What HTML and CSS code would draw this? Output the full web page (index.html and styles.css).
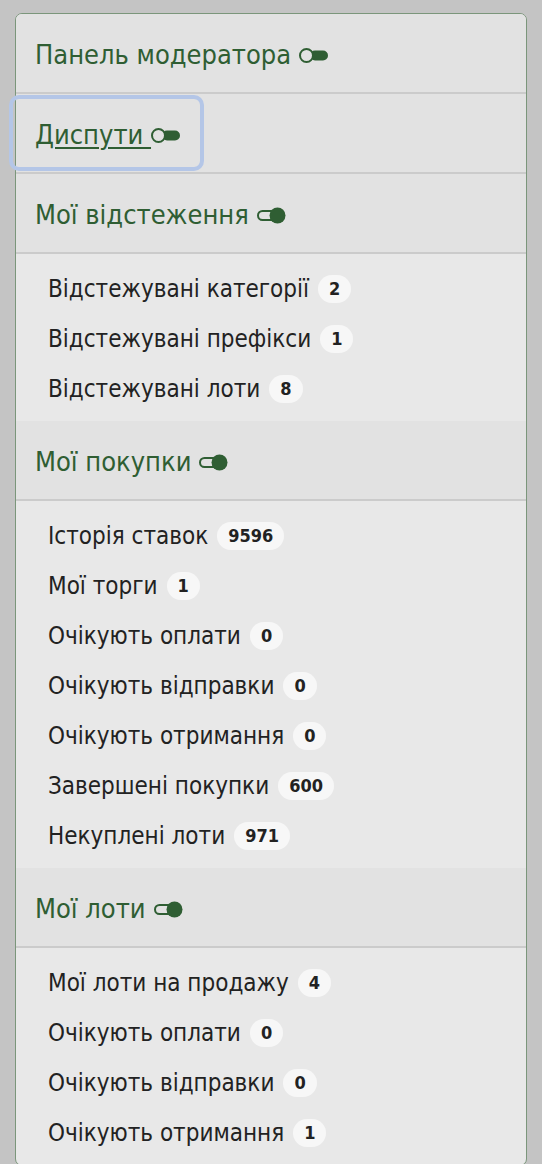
FILE: index.html
```html
<!DOCTYPE html>
<html lang="uk">
<head>
<meta charset="utf-8">
<title>Меню</title>
<link rel="stylesheet" href="styles.css">
</head>
<body>
<nav class="panel">
  <div class="head"><a class="head-link" href="#">Панель модератора <svg class="tog" viewBox="0 0 29 17" width="29" height="17"><rect x="11" y="3.5" width="18" height="10" rx="5" fill="#2f5e33"/><circle cx="7.5" cy="8.5" r="6.5" fill="#e2e2e2" stroke="#2f5e33" stroke-width="2"/></svg></a></div>
  <div class="head"><a class="head-link focus" href="#"><span class="u">Диспути </span><svg class="tog" viewBox="0 0 29 17" width="29" height="17"><rect x="11" y="3.5" width="18" height="10" rx="5" fill="#2f5e33"/><circle cx="7.5" cy="8.5" r="6.5" fill="#e2e2e2" stroke="#2f5e33" stroke-width="2"/></svg></a></div>
  <div class="head"><a class="head-link" href="#">Мої відстеження <svg class="tog" viewBox="0 0 29 17" width="29" height="17"><rect x="1" y="4" width="18" height="9" rx="4.5" fill="none" stroke="#2f5e33" stroke-width="2"/><circle cx="20.5" cy="8.5" r="8" fill="#2f5e33"/></svg></a></div>
  <ul class="list">
    <li class="item"><span>Відстежувані категорії</span><span class="badge">2</span></li>
    <li class="item"><span>Відстежувані префікси</span><span class="badge">1</span></li>
    <li class="item"><span>Відстежувані лоти</span><span class="badge">8</span></li>
  </ul>
  <div class="head"><a class="head-link" href="#">Мої покупки <svg class="tog" viewBox="0 0 29 17" width="29" height="17"><rect x="1" y="4" width="18" height="9" rx="4.5" fill="none" stroke="#2f5e33" stroke-width="2"/><circle cx="20.5" cy="8.5" r="8" fill="#2f5e33"/></svg></a></div>
  <ul class="list">
    <li class="item"><span>Історія ставок</span><span class="badge">9596</span></li>
    <li class="item"><span>Мої торги</span><span class="badge">1</span></li>
    <li class="item"><span>Очікують оплати</span><span class="badge">0</span></li>
    <li class="item"><span>Очікують відправки</span><span class="badge">0</span></li>
    <li class="item"><span>Очікують отримання</span><span class="badge">0</span></li>
    <li class="item"><span>Завершені покупки</span><span class="badge">600</span></li>
    <li class="item"><span>Некуплені лоти</span><span class="badge">971</span></li>
  </ul>
  <div class="head"><a class="head-link" href="#">Мої лоти <svg class="tog" viewBox="0 0 29 17" width="29" height="17"><rect x="1" y="4" width="18" height="9" rx="4.5" fill="none" stroke="#2f5e33" stroke-width="2"/><circle cx="20.5" cy="8.5" r="8" fill="#2f5e33"/></svg></a></div>
  <ul class="list">
    <li class="item"><span>Мої лоти на продажу</span><span class="badge">4</span></li>
    <li class="item"><span>Очікують оплати</span><span class="badge">0</span></li>
    <li class="item"><span>Очікують відправки</span><span class="badge">0</span></li>
    <li class="item"><span>Очікують отримання</span><span class="badge">1</span></li>
  </ul>
</nav>
</body>
</html>
```

FILE: styles.css
```css
html, body {
  margin: 0;
  padding: 0;
}
body {
  background: #c4c4c4;
  font-family: "DejaVu Sans Condensed", "DejaVu Sans", sans-serif;
  font-stretch: condensed;
  padding: 13px 15px 0;
}
.panel {
  background: #e8e8e8;
  border: 1px solid #7b967b;
  border-radius: 7px;
}
.head {
  background: #e2e2e2;
  border-bottom: 2px solid #cbcbcb;
  padding: 5px 0;
}
.panel > .head:first-child {
  border-radius: 6px 6px 0 0;
}
.head-link {
  display: inline-flex;
  align-items: center;
  margin-left: -3px;
  padding: 22px 20px 18px 22px;
  line-height: 28px;
  font-size: 27px;
  color: #2f5e33;
  text-decoration: none;
  border-radius: 6px;
}
.head-link .u {
  white-space: pre;
  text-decoration: underline;
  text-decoration-thickness: 2px;
  text-underline-offset: 3px;
}
.head-link.focus {
  outline: 4px solid #b4c6e7;
  outline-offset: 0;
}
.tog {
  display: block;
  margin-left: 8px;
  margin-top: 1px;
}
.head-link.focus .tog {
  margin-left: 0;
}
.list {
  list-style: none;
  margin: 0;
  padding: 10px 0 7px 32px;
}
.item {
  display: flex;
  align-items: center;
  gap: 9px;
  height: 50px;
  font-size: 24px;
  color: #222;
}
.badge {
  display: inline-block;
  background: #f7f7f7;
  border-radius: 14px;
  padding: 0 11px;
  line-height: 28px;
  font-size: 18px;
  font-weight: bold;
  font-stretch: normal;
  color: #222;
}
```
